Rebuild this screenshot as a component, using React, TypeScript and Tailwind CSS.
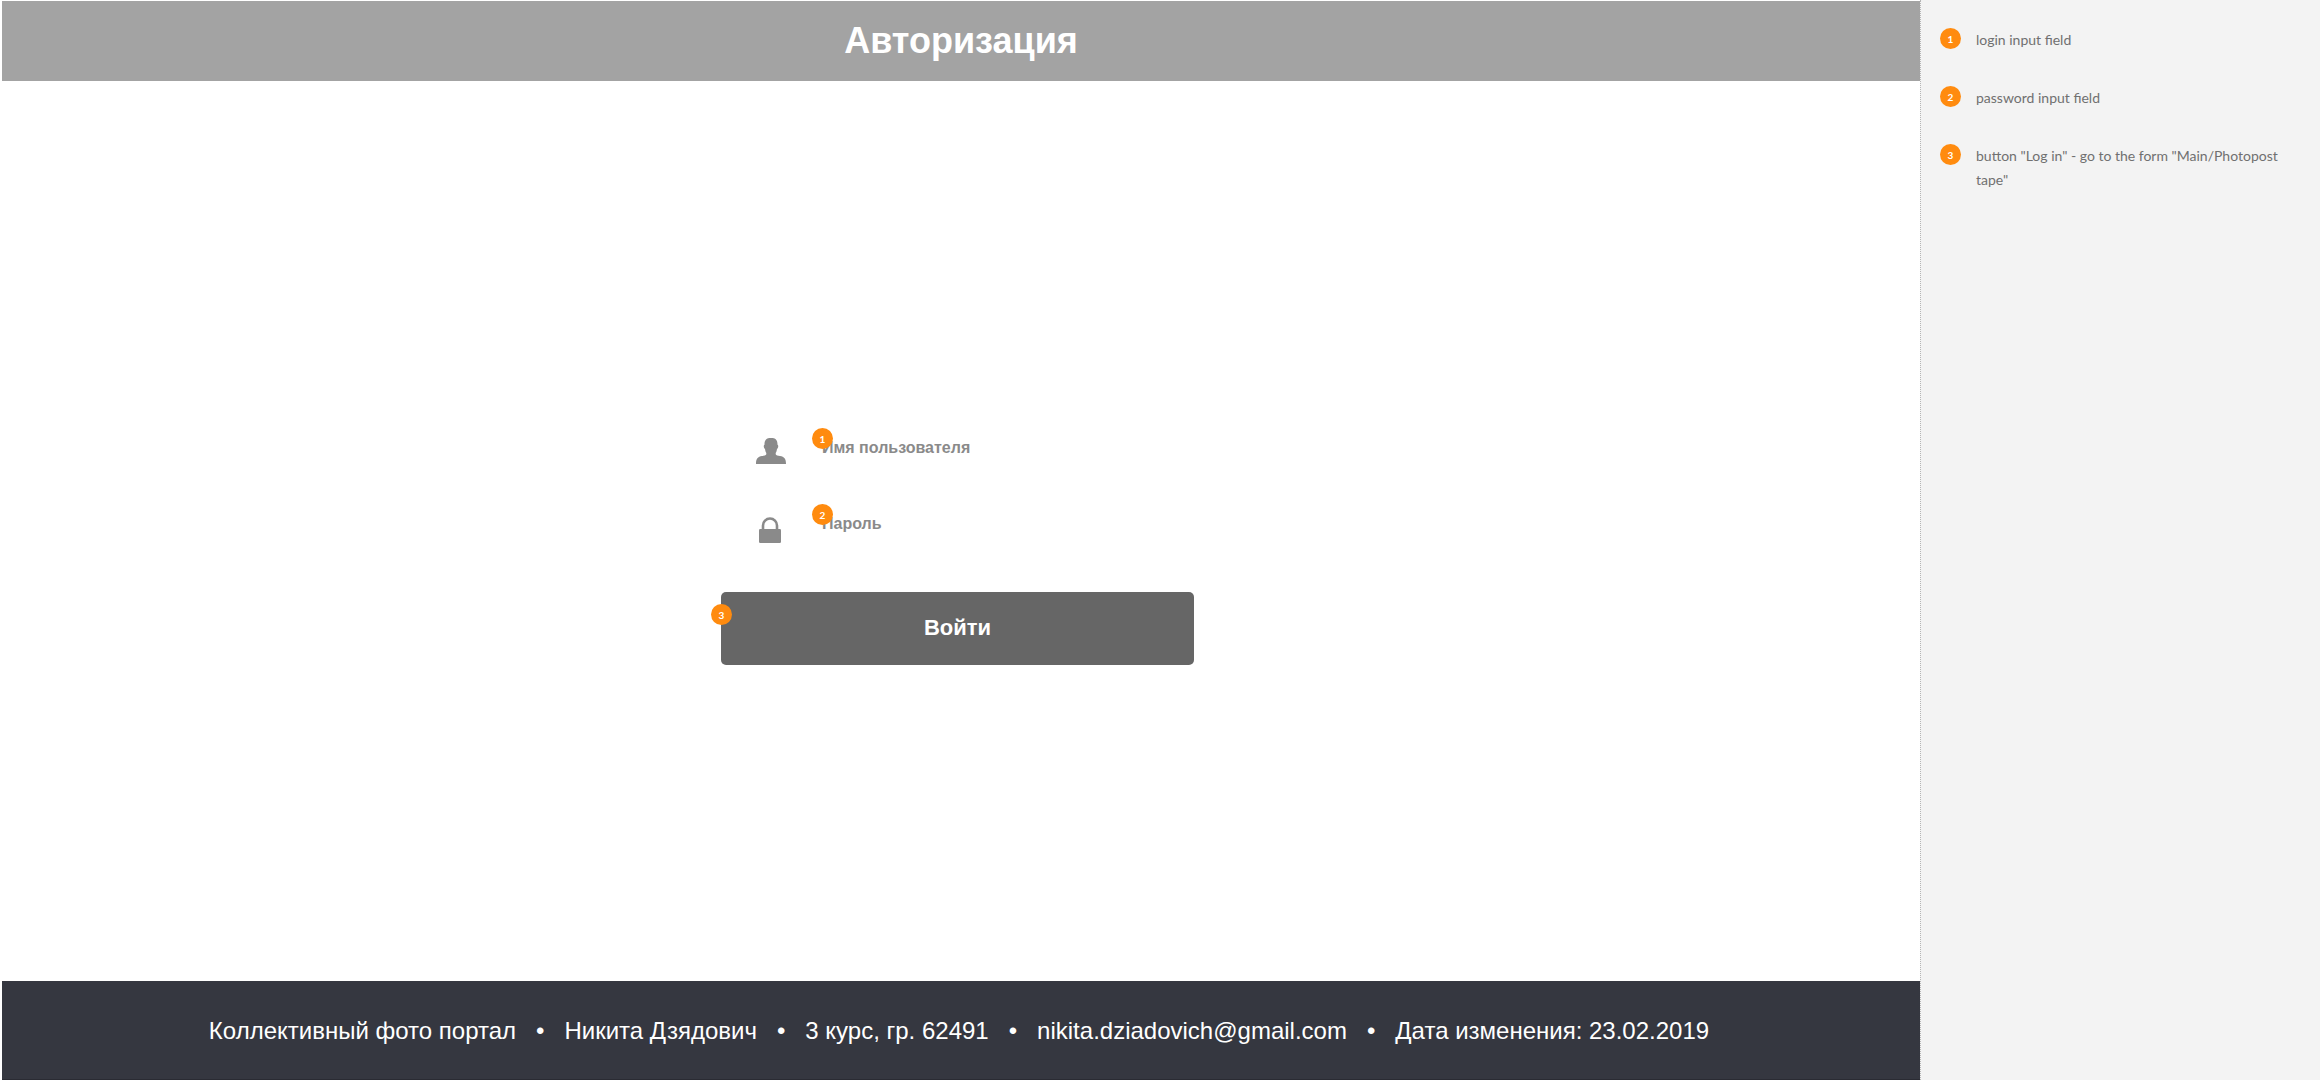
import type { ReactNode } from "react";

const notes = [
  "login input field",
  "password input field",
  'button "Log in" - go to the form "Main/Photopost tape"',
];

const footerItems = [
  "Коллективный фото портал",
  "Никита Дзядович",
  "3 курс, гр. 62491",
  "nikita.dziadovich@gmail.com",
  "Дата изменения: 23.02.2019",
];

function Badge({ n, className = "" }: { n: number; className?: string }) {
  return (
    <span
      className={`flex size-[21px] shrink-0 items-center justify-center rounded-full bg-[#ff8b0f] font-['Lato',sans-serif] text-[10px] leading-none font-bold text-white ${className}`}
    >
      {n}
    </span>
  );
}

function UserIcon() {
  return (
    <svg viewBox="0 0 30 48" className="h-12 w-[30px]" fill="#8a8a8a" aria-hidden="true">
      <path d="M15 15c-4.700 0-6.600 2-6.500 6.700-1.200.4-.9 3.300.5 4.200.3 2 .7 3.200 1.300 4.100v1.200c-.4 1.100-2.300 1.500-4.300 1.900C1.800 33.900 0 35.700 0 41h30c0-5.300-1.800-7.100-6-7.900-2-.4-3.900-.8-4.300-1.900V30c.6-.9 1-2.100 1.300-4.100 1.400-.9 1.700-3.800.5-4.200.1-4.700-1.800-6.700-6.500-6.700z" />
    </svg>
  );
}

function LockIcon() {
  return (
    <svg viewBox="0 0 30 48" className="h-12 w-[30px]" aria-hidden="true">
      <path d="M7 31v-4.500a7 7 0 0 1 14 0V31" fill="none" stroke="#8a8a8a" strokeWidth="2.600" />
      <rect x="3" y="30" width="22" height="14" rx="1.200" fill="#8a8a8a" />
    </svg>
  );
}

function Field({ id, label, type, n, icon }: { id: string; label: string; type: string; n: number; icon: ReactNode }) {
  return (
    <div className="flex h-12 items-center pl-[35px]">
      <label htmlFor={id} aria-label={label}>
        {icon}
      </label>
      <div className="relative ml-9 flex-1">
        <input
          id={id}
          type={type}
          placeholder={label}
          className="block h-12 w-full bg-transparent pt-0.5 text-base font-bold text-[#8a8a8a] outline-none placeholder:text-[#8a8a8a]"
        />
        <Badge n={n} className="absolute top-[5px] -left-2.5" />
      </div>
    </div>
  );
}

export default function App() {
  return (
    <div className="flex min-h-screen bg-white font-['Liberation_Sans',Arial,sans-serif]">
      <div className="flex flex-1 flex-col pt-px pl-0.5">
        <header className="flex h-20 items-center justify-center bg-[#a3a3a3]">
          <h1 className="text-4xl font-bold text-white">Авторизация</h1>
        </header>
        <main className="flex flex-1 items-center justify-center pt-[26px] pr-[7px]">
          <form className="w-[473px]" onSubmit={(e) => e.preventDefault()}>
            <div className="flex flex-col gap-7">
              <Field id="login" label="Имя пользователя" type="text" n={1} icon={<UserIcon />} />
              <Field id="password" label="Пароль" type="password" n={2} icon={<LockIcon />} />
            </div>
            <div className="relative mt-[45px]">
              <button type="submit" className="h-[73px] w-full rounded-[5px] bg-[#666] pb-0.5 text-[22px] font-bold text-white">
                Войти
              </button>
              <Badge n={3} className="absolute top-3 -left-2.5" />
            </div>
          </form>
        </main>
        <footer className="flex h-[99px] items-center justify-center border-b border-[#2a2b33] bg-[#353740] pt-0.5 pr-1 text-2xl whitespace-pre text-white">
          {footerItems.join("   •   ")}
        </footer>
      </div>
      <aside className="w-[400px] shrink-0 border-l border-dotted border-[#b5b5b5] bg-[#f3f3f3] pt-7 pr-10 pl-[19px]">
        <ol className="flex flex-col gap-[34px]">
          {notes.map((note, i) => (
            <li key={note} className="flex gap-[15px]">
              <Badge n={i + 1} />
              <p className="font-['Lato',sans-serif] text-sm leading-6 text-[#707070]">{note}</p>
            </li>
          ))}
        </ol>
      </aside>
    </div>
  );
}
